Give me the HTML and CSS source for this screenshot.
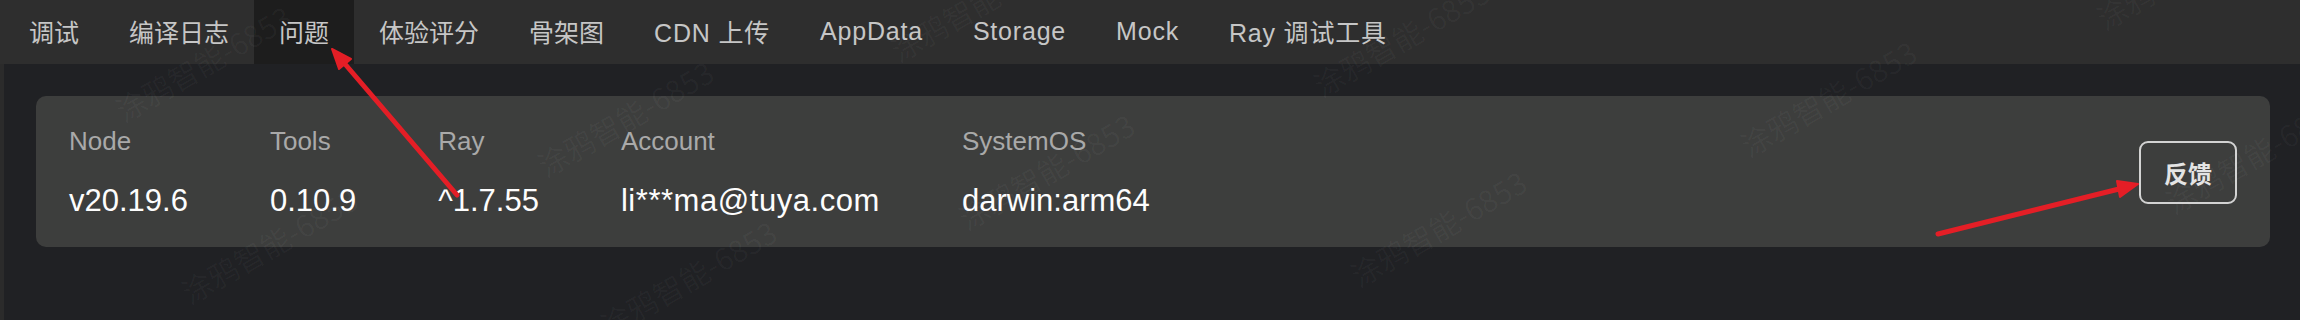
FILE: index.html
```html
<!DOCTYPE html>
<html lang="zh-CN">
<head>
<meta charset="utf-8">
<title>Debug panel</title>
<link rel="stylesheet" href="styles.css">
</head>
<body>
<div class="app">
  <div class="side-strip"></div>
  <div class="main">
    <nav class="tabs">
      <div class="tab">调试</div>
      <div class="tab">编译日志</div>
      <div class="tab active">问题</div>
      <div class="tab">体验评分</div>
      <div class="tab">骨架图</div>
      <div class="tab lat">CDN 上传</div>
      <div class="tab lat">AppData</div>
      <div class="tab lat">Storage</div>
      <div class="tab lat">Mock</div>
      <div class="tab lat">Ray 调试工具</div>
    </nav>
    <section class="content">
      <div class="card">
        <div class="info">
          <div class="item"><div class="label">Node</div><div class="value">v20.19.6</div></div>
          <div class="item"><div class="label">Tools</div><div class="value">0.10.9</div></div>
          <div class="item"><div class="label">Ray</div><div class="value">^1.7.55</div></div>
          <div class="item"><div class="label">Account</div><div class="value email">li***ma@tuya.com</div></div>
          <div class="item"><div class="label">SystemOS</div><div class="value">darwin:arm64</div></div>
        </div>
        <button class="feedback">反馈</button>
      </div>
    </section>
  </div>
</div>

<div class="watermarks">
  <span class="wm" style="left:125px;top:95px">涂鸦智能-6853</span>
  <span class="wm" style="left:547px;top:150px">涂鸦智能-6853</span>
  <span class="wm" style="left:968px;top:203px">涂鸦智能-6853</span>
  <span class="wm" style="left:900px;top:35px">涂鸦智能-6853</span>
  <span class="wm" style="left:1323px;top:70px">涂鸦智能-6853</span>
  <span class="wm" style="left:1750px;top:130px">涂鸦智能-6853</span>
  <span class="wm" style="left:2175px;top:187px">涂鸦智能-6853</span>
  <span class="wm" style="left:2106px;top:3px">涂鸦智能-6853</span>
  <span class="wm" style="left:191px;top:277px">涂鸦智能-6853</span>
  <span class="wm" style="left:610px;top:310px">涂鸦智能-6853</span>
  <span class="wm" style="left:1360px;top:260px">涂鸦智能-6853</span>
</div>

<svg class="annotations" width="2300" height="320" viewBox="0 0 2300 320">
  <g stroke="#e41e26" stroke-width="5" stroke-linecap="round" fill="#e41e26">
    <line x1="457" y1="195" x2="345" y2="64"/>
    <polygon points="332,49 351,59 339,69" stroke-width="2" stroke-linejoin="round"/>
    <line x1="1938" y1="234" x2="2119" y2="189"/>
    <polygon points="2138,184 2120,197 2117,181" stroke-width="2" stroke-linejoin="round"/>
  </g>
</svg>
</body>
</html>
```
FILE: styles.css
```css
* { box-sizing: border-box; }

html, body {
  margin: 0;
  padding: 0;
  width: 2300px;
  height: 320px;
  overflow: hidden;
  background: #202124;
  font-family: "Liberation Sans", "Noto Sans CJK SC", sans-serif;
}

.app {
  display: flex;
  height: 320px;
  position: relative;
}

.side-strip {
  width: 4px;
  flex: none;
  background: #2b2b2b;
}

.main {
  flex: 1;
  display: flex;
  flex-direction: column;
  background: #202124;
}

.tabs {
  display: flex;
  height: 64px;
  background: #2e2e2e;
  margin-left: -4px;
  padding-left: 4px;
}

.tab {
  display: flex;
  align-items: center;
  padding: 0 25px 2px;
  font-size: 25px;
  color: #c6c6c6;
  white-space: nowrap;
}

.tab.lat {
  letter-spacing: 0.8px;
}

.tab.active {
  background: #1d1d1d;
}

.content {
  padding: 32px 30px 0 32px;
}

.card {
  display: flex;
  align-items: center;
  background: #3d3e3d;
  border-radius: 10px;
  padding: 27px 33px 26px;
}

.info {
  display: flex;
  gap: 82px;
}

.item {
  display: flex;
  flex-direction: column;
}

.label {
  font-size: 26px;
  line-height: 36px;
  color: #a9a9a9;
}

.value {
  margin-top: 22px;
  font-size: 31px;
  line-height: 40px;
  color: #fdfdfd;
}

.value.email {
  letter-spacing: 0.55px;
}

.feedback {
  margin-left: auto;
  width: 98px;
  height: 63px;
  background: transparent;
  border: 2px solid #d3d3d3;
  border-radius: 9px;
  color: #e4e4e4;
  font-family: "Noto Sans CJK SC", sans-serif;
  font-size: 24px;
  font-weight: 700;
  padding: 0;
}

.watermarks {
  position: absolute;
  left: 0;
  top: 0;
  width: 2300px;
  height: 320px;
  overflow: hidden;
  pointer-events: none;
}

.wm {
  position: absolute;
  font-family: "Noto Sans CJK SC", sans-serif;
  font-size: 30px;
  line-height: 30px;
  white-space: nowrap;
  color: rgba(255, 255, 255, 0.035);
  transform-origin: 0 100%;
  transform: rotate(-30deg);
}

.annotations {
  position: absolute;
  left: 0;
  top: 0;
  pointer-events: none;
}
```
